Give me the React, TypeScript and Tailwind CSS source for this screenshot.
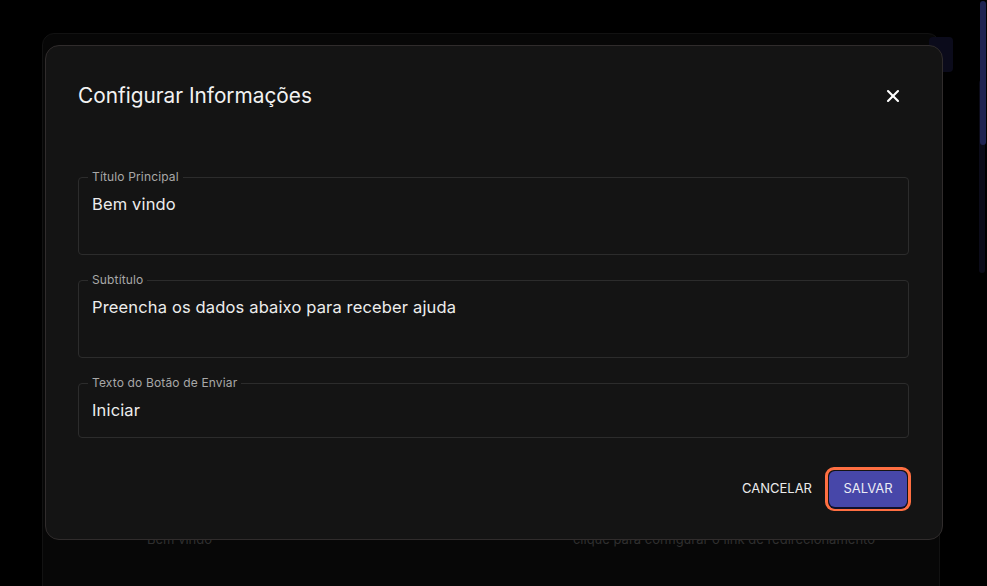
import { X } from 'lucide-react'

const fields = [
  { label: 'Título Principal', value: 'Bem vindo', rows: 2 },
  { label: 'Subtítulo', value: 'Preencha os dados abaixo para receber ajuda', rows: 2 },
  { label: 'Texto do Botão de Enviar', value: 'Iniciar', rows: 1 },
]

function Field({ label, value, rows }: { label: string; value: string; rows: number }) {
  return (
    <fieldset className="border border-[#2c2c2c] rounded-[4px] pl-[13px] pr-[14px] pt-[8px] pb-[15px] min-w-0">
      <legend className="ml-[-4px] px-[4px] text-[12px] leading-[16px] tracking-[0.15px] text-[#a8a8a8]">{label}</legend>
      <div className={rows === 2 ? 'h-[46px] text-[16.5px] leading-[23px] tracking-[0.15px] text-[#ededed]' : 'h-[23px] text-[16.5px] leading-[23px] tracking-[0.15px] text-[#ededed]'}>
        {value}
      </div>
    </fieldset>
  )
}

export default function App() {
  return (
    <div className="relative w-[987px] h-[586px] bg-black overflow-hidden" style={{ fontFamily: 'Inter, "Noto Sans", sans-serif' }}>
      {/* page behind the dialog */}
      <div className="pt-[33px] pl-[42px] pr-[47px]">
        <div className="relative h-[600px] rounded-[12px] bg-[#070707] border border-[#121212]">
          <div className="absolute top-[3px] right-[-14px] w-[24px] h-[35px] rounded-[4px] bg-[#0b0b1b]" />
          <div className="flex justify-between pt-[496px] pl-[104px] pr-[64px] text-[13px] text-[#2f2f2f]">
            <span>Bem vindo</span>
            <span>clique para configurar o link de redirecionamento</span>
          </div>
        </div>
      </div>

      {/* scrollbar */}
      <div className="absolute right-[2px] top-[80px] w-[6px] h-[193px] rounded-full bg-[#0b0b19]" />
      <div className="absolute right-[1px] top-[1px] w-[6px] h-[144px] rounded-full bg-[#1f2352]" />

      {/* dialog */}
      <div className="absolute left-[45px] top-[45px] w-[898px] rounded-[14px] bg-[#141414] border border-[#302c2c] pt-[36px] pl-[32px] pr-[33px] pb-[28px]">
        <div className="flex items-center justify-between h-[28px]">
          <h2 className="text-[20.8px] leading-[28px] text-[#f2f2f2]">Configurar Informações</h2>
          <X className="w-[20px] h-[20px] mr-[6px] text-white" strokeWidth={2.5} />
        </div>

        <div className="mt-[59px] flex flex-col gap-[17px]">
          {fields.map((f) => (
            <Field key={f.label} {...f} />
          ))}
        </div>

        <div className="mt-[29px] flex items-center justify-end gap-[13px]">
          <button className="h-[36px] text-[13px] text-[#ececec]">CANCELAR</button>
          <button className="w-[86px] h-[44px] rounded-[9px] border-[3px] border-[#ff6f42] bg-[#141414] p-[1px] mr-[-2px]">
            <span className="flex items-center justify-center w-full h-full rounded-[6px] bg-[#4747a9] text-[13px] text-[#ececf5] shadow-[0_2px_0_#10102a]">
              SALVAR
            </span>
          </button>
        </div>
      </div>
    </div>
  )
}
